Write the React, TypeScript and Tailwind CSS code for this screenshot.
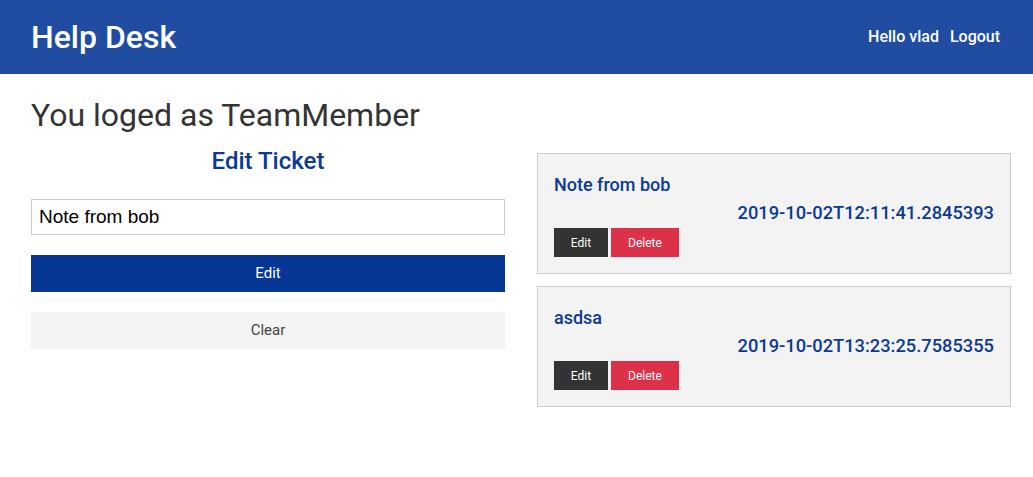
export default function App() {
  const tickets = [
    { title: "Note from bob", date: "2019-10-02T12:11:41.2845393" },
    { title: "asdsa", date: "2019-10-02T13:23:25.7585355" },
  ];

  return (
    <div className="min-h-screen bg-white font-['Roboto',sans-serif]">
      {/* header */}
      <header className="h-[74px] bg-[#204da2] flex items-center justify-between pl-[31px] pr-[33px]">
        <span className="text-white text-[32px] font-medium">Help Desk</span>
        <nav className="flex gap-[11px] text-white text-[16px] font-medium">
          <span>Hello vlad</span>
          <span>Logout</span>
        </nav>
      </header>

      <main className="pl-[31px] w-[1011px]">
        <h1 className="text-[32px] text-[#333] mt-[19px] leading-[44px]">You loged as TeamMember</h1>

        <div className="flex gap-[32px] mt-[7px]">
          {/* left column: edit form */}
          <section className="w-[474px] flex flex-col">
            <h2 className="text-center text-[24px] font-medium text-[#0b3a93] leading-[32px] mt-[1px]">Edit Ticket</h2>
            <input
              className="mt-[22px] h-[36px] border border-[#cccccc] px-[7px] text-[19px] text-black font-['Liberation_Sans',Arial,sans-serif] outline-none"
              defaultValue="Note from bob"
            />
            <button className="mt-[20px] h-[37px] bg-[#063795] text-white text-[15px]">Edit</button>
            <button className="mt-[20px] h-[37px] bg-[#f3f3f3] text-[#444] text-[15px]">Clear</button>
          </section>

          {/* right column: ticket list */}
          <section className="w-[474px] flex flex-col gap-[12px] pt-[9px]">
            {tickets.map((t) => (
              <div key={t.date} className="bg-[#f3f3f3] border border-[#cccccc] px-[16px] pt-[19px] pb-[16px]">
                <div className="text-[18px] font-medium text-[#0b3a8f] leading-[24px]">{t.title}</div>
                <div className="text-right text-[18.3px] font-medium text-[#0b3a8f] leading-[24px] mt-[4px]">{t.date}</div>
                <div className="flex gap-[3px] mt-[3px]">
                  <button className="w-[54px] h-[29px] bg-[#333333] text-white text-[12px]">Edit</button>
                  <button className="w-[68px] h-[29px] bg-[#dc3148] text-white text-[12px]">Delete</button>
                </div>
              </div>
            ))}
          </section>
        </div>
      </main>
    </div>
  );
}
